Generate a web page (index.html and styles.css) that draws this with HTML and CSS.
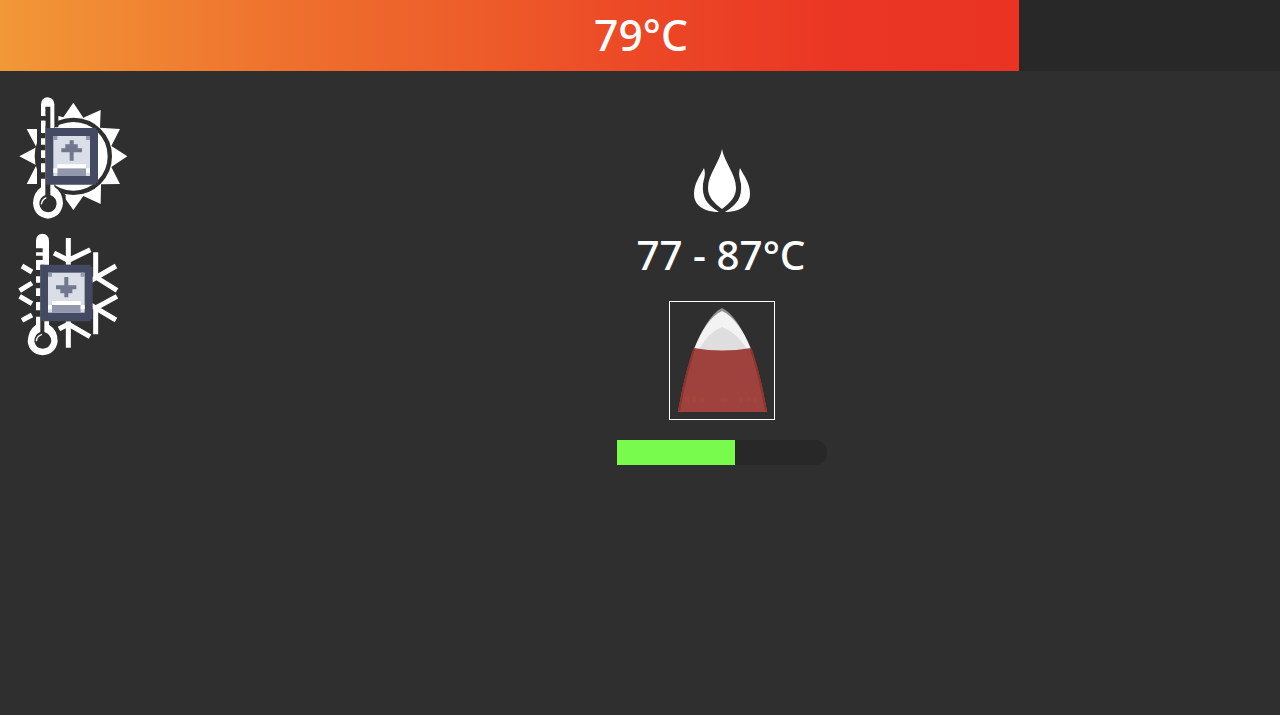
FILE: index.html
```
<!DOCTYPE html>
<html lang="en">
<head>
	<meta charset="UTF-8">
	<title>Temperature</title>
	<link rel="stylesheet" href="styles.css">
</head>
<body>
	<div class="temp_bar">
		<div class="temp_fill" style="width: 1019.4px"></div>
		<span class="temp_text">79°C</span>
	</div>
	<div class="main">
		<div class="controls">
			<!-- heat up -->
			<svg class="control" viewBox="0 0 375 405">
				<path class="white" d="M190 38L220 83L272 60L270 113L330 117L304 168L352 199L304 231L330 282L273 283L272 342L220 318L190 360L160 318L108 310L88 282H50L79 226L28 199L79 172L50 117H88L108 90L146 78L160 82Z"/>
				<circle class="ring" cx="190" cy="199" r="109.5"/>
				<path class="ground" d="M81 20H145V112H135V285L147 301L167 315V390H60V310L81 290Z"/>
				<path class="white" d="M93 109V43Q94 23 113 22Q132 24 133 43V290Q158 306 159 340Q154 382 114 386Q73 382 69 340Q70 308 93 292V266H106V247H93V220H106V204H93V181H106V164H93V145H106V129H93Z"/>
				<path class="ground" d="M93 62H106V50H121V315Q140 323 140 342Q136 366 114 367Q91 365 88 342Q88 322 106 315V92H93V78H106V74H93Z"/>
				<path class="white" d="M93 60H106V78H93ZM93 92H106V109H93Z"/>
				<path class="glint" d="M94 343Q96 329 109 323"/>
				<use href="#keycap" x="108" y="114"/>
				<path class="arrow" d="M179 151H191V163H203V175H216V187H191V212H179V187H154V175H166V163H179Z"/>
			</svg>
			<!-- cool down -->
			<svg class="control" viewBox="0 0 375 405">
				<path class="flake" d="M175 30V110M132 75L175 97L241 65M175 280V359M147 303L175 288L240 326M257 73V147M230 165L318 114M257 147L321 187M257 319V240M230 224L318 276M257 240L321 205M36 114L66 132M29 188L66 165M29 205L66 227M36 277L66 261"/>
				<path class="white" d="M78 109V38Q79 18 97 17Q116 18 117 38V290Q143 306 143 340Q138 378 98 382Q57 378 53 340Q55 306 78 290V266H91V247H78V222H91V204H78V181H91V164H78V145H91V126H78Z"/>
				<path class="ground" d="M78 61H98V73H78ZM78 83H98V96H78ZM91 110H103V312Q124 319 124 340Q120 361 98 362Q76 361 73 340Q73 319 91 312Z"/>
				<path class="glint" d="M79 340Q80 324 96 319"/>
				<use href="#keycap" x="92" y="110"/>
				<path class="arrow" d="M163 147H175V172H199V184H187V196H175V208H163V196H151V184H138V172H163Z"/>
			</svg>
		</div>
		<div class="station">
			<svg class="flame" viewBox="0 0 125 80">
				<path class="white" d="M62 9C64 22 76 34 76 48C76 57 70 63 62 69C54 63 48 57 48 48C48 34 60 22 62 9Z"/>
				<path class="white" d="M44 28C40 36 34 43 34 54C34 66 45 72 59 72C46 64 42 57 43 44C44 38 46 35 44 28Z"/>
				<path class="white" d="M80 28C84 36 90 43 90 54C90 66 79 72 65 72C78 64 82 57 81 44C80 38 78 35 80 28Z"/>
			</svg>
			<div class="range">77 - 87°C</div>
			<div class="frame">
				<svg class="peak" viewBox="0 0 104 117">
					<path class="peak_edge" d="M8 110C15 75 29 17 52 6C76 17 90 75 97 110Z"/>
					<path class="snow" d="M24 47C32 27 41 14 52 9C63 14 73 27 81 47L66 50H38Z"/>
					<path class="snow_shade" d="M29 47Q39 30 52 25Q67 31 77 47L66 49H38Z"/>
					<path class="rock" d="M24 46Q52 51 81 46C88 65 93 86 97 110H8C12 86 17 65 24 46Z"/>
					<path class="rock_side" d="M24 47C18 65 13 87 9 109M81 47C87 65 92 87 96 109"/>
					<path class="rock_mark" d="M17 95V101M24 94V100M32 95V101M49 98H57M71 95V101M77 97H81M85 95V101"/>
				</svg>
			</div>
			<div class="progress"><div class="progress_fill" style="width: 118px"></div></div>
		</div>
	</div>
	<svg class="defs">
		<symbol id="keycap" width="156" height="170" viewBox="0 0 156 170" overflow="visible">
			<path fill="#434a61" d="M0 0H150V6H156V164H150V170H0Z"/>
			<rect x="22" y="24" width="110" height="120" fill="#dadee6"/>
			<path fill="#9298ae" d="M22 24H34V36H22ZM120 24H132V36H120ZM34 121H120V144H34Z"/>
			<path fill="#fff" d="M34 109H120V121H132V134H120V121H34V134H22V121H34Z"/>
		</symbol>
	</svg>
</body>
</html>
```
FILE: styles.css
```
body{margin: 0; height: 715px; overflow: hidden; background-color: #2f2f2f; color: #fff; font-family: "Noto Sans", "Open Sans", sans-serif; font-weight: 500;}
svg{display: block;}

/* top bar */
.temp_bar{display: grid; height: 71px; background-color: #282828;}
.temp_fill, .temp_text{grid-area: 1 / 1;}
.temp_fill{height: 70.5px; background: linear-gradient(90deg, #f19837 0, #f07c30 200px, #ee6a2c 340px, #ed5a29 500px, #ec4826 640px, #ea3624 840px, #ea3323 100%);}
.temp_text{justify-self: center; padding-left: 2px; font-size: 42.6px; line-height: 69px;}

/* layout */
.main{display: flex;}
.controls{display: flex; flex-direction: column; gap: 3px; padding: 19px 0 0 10px;}
.control{width: 125px; height: 135px;}
.station{display: flex; flex-direction: column; align-items: center; width: 210px; margin-left: 482px; padding-top: 69px;}

/* icons */
.white{fill: #fff;}
.ground{fill: #2f2f2f;}
.ring{fill: none; stroke: #2f2f2f; stroke-width: 13;}
.flake{fill: none; stroke: #fff; stroke-width: 15;}
.glint{fill: none; stroke: #fff; stroke-width: 4;}
.arrow{fill: #70778e;}
.flame{width: 125px; height: 80px;}

.range{height: 60px; margin: 5px 2px 0 0; font-size: 40.3px; line-height: 60px; white-space: nowrap;}

.frame{width: 104px; height: 117px; margin-top: 16px; border: 1px solid #fff;}
.peak{width: 104px; height: 117px;}
.peak_edge{fill: #929292;}
.snow{fill: #f3f3f3;}
.snow_shade{fill: #dedede;}
.rock{fill: #9f423d;}
.rock_side{fill: none; stroke: #8b3430; stroke-width: 2;}
.rock_mark{fill: none; stroke: #a5483f; stroke-width: 4; opacity: .6;}

.progress{width: 210px; height: 25px; margin-top: 20px; border-radius: 0 12px 12px 0; background-color: #282828;}
.progress_fill{height: 24.5px; background-color: #78fb4c;}

.defs{width: 0; height: 0;}
```
